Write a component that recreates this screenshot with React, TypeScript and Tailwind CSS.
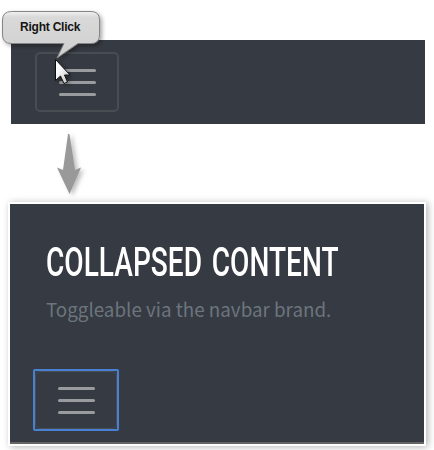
function MenuIcon() {
  return (
    <span className="flex w-[37px] flex-col gap-[9px]">
      <span className="h-[3px] rounded-full bg-[#999b9e]" />
      <span className="h-[3px] rounded-full bg-[#999b9e]" />
      <span className="h-[3px] rounded-full bg-[#999b9e]" />
    </span>
  );
}

function Callout() {
  return (
    <div className="absolute left-0 top-0 h-[94px] w-[110px]">
      <svg className="absolute inset-0" width="110" height="94" viewBox="0 0 110 94">
        <defs>
          <linearGradient id="bubble" x1="0" y1="0" x2="0" y2="1">
            <stop offset="0" stopColor="#f2f2f2" />
            <stop offset="0.12" stopColor="#d9d9d9" />
            <stop offset="1" stopColor="#cfcfcf" />
          </linearGradient>
          <linearGradient id="pointer" x1="0" y1="0" x2="1" y2="1">
            <stop offset="0.3" stopColor="#ffffff" />
            <stop offset="1" stopColor="#bcbcbc" />
          </linearGradient>
          <filter id="soft" x="-30%" y="-30%" width="170%" height="170%">
            <feDropShadow dx="2" dy="2" stdDeviation="2.2" floodOpacity="0.35" />
          </filter>
        </defs>
        <path
          filter="url(#soft)"
          d="M11.5 11.5H91Q99.500 11.500 99.500 20V35Q99.500 43.500 91 43.500H78L57 58L64 43.500H11.500Q2.500 43.500 2.500 35V20Q2.500 11.500 11.500 11.500Z"
          fill="url(#bubble)"
          stroke="#858585"
        />
        <path
          filter="url(#soft)"
          d="M55.500 59.500V80.500L60.500 76L64 83.500L67.500 82L64.500 75H70Z"
          fill="url(#pointer)"
          stroke="#111"
          strokeWidth="1"
        />
      </svg>
      <span className="absolute left-[20px] top-[19px] whitespace-nowrap font-['Liberation_Sans',Arial,sans-serif] text-[12px] font-bold leading-[16px] tracking-[-0.22px] text-[#141414]">
        Right Click
      </span>
    </div>
  );
}

export default function App() {
  return (
    <main className="relative h-[450px] w-[434px] overflow-hidden bg-white pt-10">
      <nav className="ml-[11px] h-[84px] w-[414px] bg-[#363a42] pl-6 pt-3">
        <button
          aria-label="Toggle navigation"
          className="flex h-[60px] w-[84px] items-center justify-center rounded-[5px] border-2 border-[#494d51]"
        >
          <MenuIcon />
        </button>
      </nav>
      <div className="flex h-20 pl-[50px] pt-2">
        <svg width="40" height="68" viewBox="0 0 40 68" className="drop-shadow-[3px_2px_2px_rgba(0,0,0,0.25)]">
          <path d="M18 2H19.500L25 38L31 35.500L19.500 62L7 35.500L13 38Z" fill="#999" />
        </svg>
      </div>
      <section className="ml-[10px] h-[240px] w-[414px] border-b-2 border-[#666563] bg-[#363a42] shadow-[0_0_0_2px_#fff,2px_1px_7px_2px_rgba(0,0,0,0.3)]">
        <div className="h-[165px] pl-9 pt-[34px]">
          <h1 className="h-[48px] w-[400px] origin-left scale-x-[0.685] whitespace-nowrap font-['Roboto',sans-serif] text-[41px] font-medium leading-[48px] text-white [word-spacing:4px]">
            COLLAPSED CONTENT
          </h1>
          <p className="mt-[8px] whitespace-nowrap font-['Noto_Sans_CJK_SC',sans-serif] text-[18.8px] leading-[30px] text-[#6c757d]">
            Toggleable via the navbar brand.
          </p>
        </div>
        <button
          aria-label="Toggle navigation"
          className="ml-[23px] flex h-[62px] w-[86px] rounded-[2px] bg-[#4880d4] p-[2px]"
        >
          <span className="flex h-full w-full bg-[#363a42]">
            <span className="flex h-full w-full items-center justify-center rounded-[5px] border border-[#494d51]">
              <MenuIcon />
            </span>
          </span>
        </button>
      </section>
      <Callout />
    </main>
  );
}
